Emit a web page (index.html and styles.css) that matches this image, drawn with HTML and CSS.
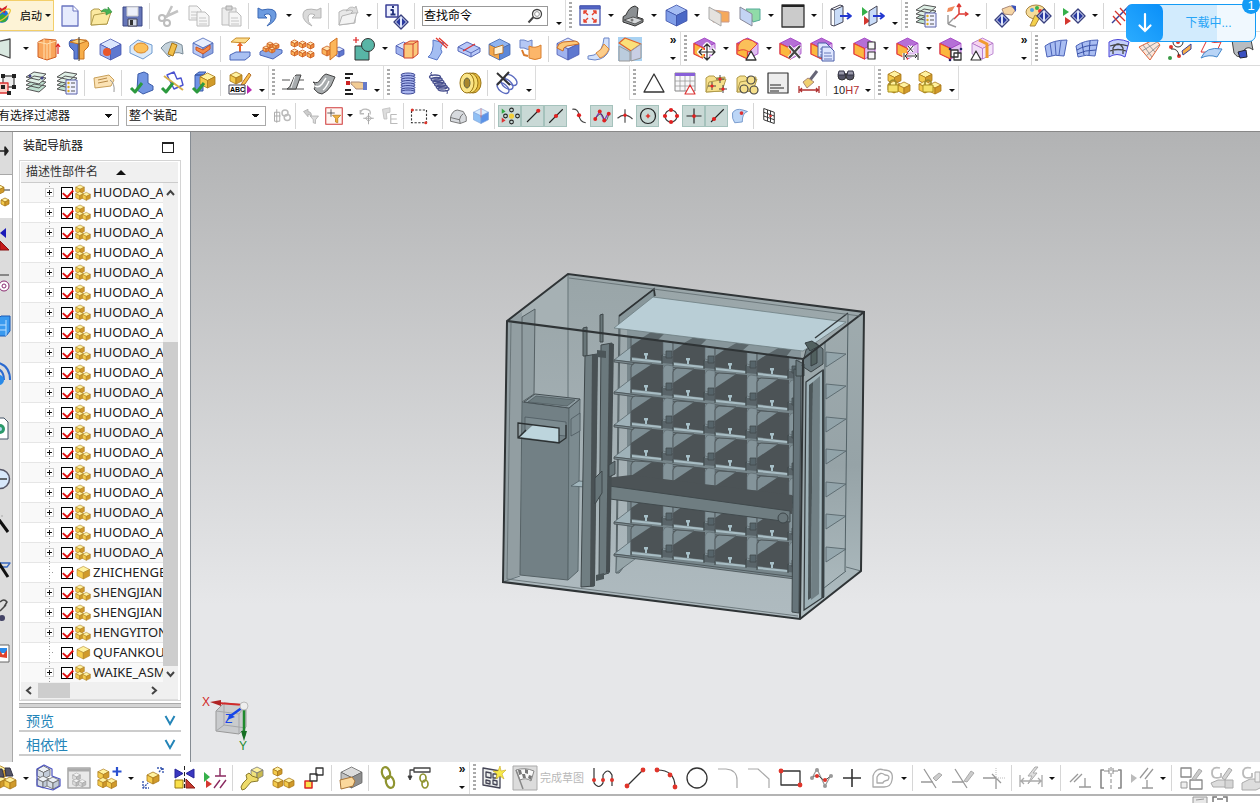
FILE: index.html
```html
<!DOCTYPE html>
<html lang="zh-CN">
<head>
<meta charset="utf-8">
<title>装配</title>
<link rel="stylesheet" href="styles.css">
</head>
<body>
<header class="ribbon">
  <div class="row row-edge">
    <div class="bar">
      <button class="start" type="button"><svg class="logo" viewBox="0 0 24 30"><circle cx="3" cy="18" r="10" fill="#1e73d8"/><path d="M-5 22q6 8 14 4l3-7-9-4z" fill="#35a93a"/><path d="M-2 4l5 3 8-5-4 12-6-4z" fill="#d3202a"/><ellipse cx="4" cy="17" rx="14" ry="5" transform="rotate(-38 4 17)" fill="none" stroke="#e9c63b" stroke-width="2"/></svg>启动<i class="tri"></i></button>
      <div class="items" data-items="new open save | cut copy paste | undo v redo | recent v | info |"></div>
      <label class="search"><input type="text" value="查找命令" aria-label="查找命令"><svg viewBox="0 0 16 16"><circle cx="10" cy="6" r="4.5" fill="#fff" stroke="#444" stroke-width="1.3"/><circle cx="10" cy="6" r="2.4" fill="none" stroke="#999"/><path d="M6.500 9l-5 5.500" stroke="#444" stroke-width="2"/></svg></label>
      <div class="items" data-items="w"></div>
    </div>
    <div class="bar grip" data-items="fit v view v shaded v section clip v backdrop v | edge edgeflip w"></div>
    <div class="bar grip last" data-items="layerset csys v | picksel palette | flip v | fishbone"></div>
  </div>
  <div class="row row-edge">
    <div class="bar cut" data-items="plane v extrude revolve hole boss emboss pocket | raise dots pattern mirror unite v split trim sheet cutbody wrap | blend fillet chamfer . »"></div>
    <div class="bar grip" data-items="fmove v freplace v fdelete fcopy v fpattern v fdim v fgroup foffset .. »"></div>
    <div class="bar grip last" data-items="surf1 surf2 surf3 surf4 sketchcv surf5 surf6"></div>
  </div>
  <div class="row">
    <div class="bar cut" data-items="nodes layers layerset | tag | chk1 chk2 chk3 | abc w"></div>
    <div class="bar grip" data-items="clamp clamp2 hand w"></div>
    <div class="bar grip" data-items="spring1 spring2 washer | nospring w"></div>
    <div class="bar grip apart" data-items="triangle table folderx folderg textbox brush | fit10 w"></div>
    <div class="bar grip" data-items="lock1 lock2 w"></div>
  </div>
  <div class="row filters">
    <select class="f-type" aria-label="选择过滤器"><option>没有选择过滤器</option></select>
    <select class="f-scope" aria-label="选择范围"><option>整个装配</option></select>
    <div class="items small" data-items="linkf | filt1 filt2 v rot rot2 | marquee v | solid cubeb | snap! endpt! midpt! tang poly! cross circ! quad plus! online! face | grid"></div>
  </div>
</header>

<main class="work">
  <nav class="tabs" id="tabs" aria-label="资源条"></nav>
  <section class="panel">
    <div class="panel-title"><h1>装配导航器</h1><button type="button" class="max" aria-label="最大化"></button></div>
    <div class="tree-box">
      <div class="tree-head">描述性部件名<i class="up"></i></div>
      <div class="tree-body">
        <ul class="tree" id="tree"></ul>
        <div class="vscroll"><svg viewBox="0 0 15 20"><path d="M4 12l3.500-4 3.500 4" fill="none" stroke="#444" stroke-width="2"/></svg><span class="vthumb"></span><svg viewBox="0 0 15 16"><path d="M4 6l3.500 4 3.500-4" fill="none" stroke="#444" stroke-width="2"/></svg></div>
      </div>
      <div class="hscroll"><svg viewBox="0 0 17 17"><path d="M10 5L6 8.500 10 12" fill="none" stroke="#444" stroke-width="2"/></svg><span class="hthumb"></span><svg viewBox="0 0 17 17"><path d="M7 5l4 3.500L7 12" fill="none" stroke="#444" stroke-width="2"/></svg></div>
    </div>
    <div class="splitter"></div>
    <button type="button" class="fold">预览<svg viewBox="0 0 12 12"><path d="M1.500 1L6 9l4.500-8" fill="none" stroke="#2485b8" stroke-width="2"/></svg></button>
    <button type="button" class="fold">相依性<svg viewBox="0 0 12 12"><path d="M1.500 1L6 9l4.500-8" fill="none" stroke="#2485b8" stroke-width="2"/></svg></button>
  </section>
  <section class="viewport">
    <svg id="scene" viewBox="191 132 1069 630" preserveAspectRatio="xMidYMid meet" role="img" aria-label="装配模型">
      <defs>
        <linearGradient id="front" x1="0" y1="0" x2="0" y2="1"><stop offset="0" stop-color="#99a5a8"/><stop offset="1" stop-color="#afbbc0"/></linearGradient>
        <linearGradient id="side" x1="0" y1="0" x2="0" y2="1"><stop offset="0" stop-color="#9fabae"/><stop offset=".5" stop-color="#96a3a7"/><stop offset="1" stop-color="#b0bec2"/></linearGradient>
        <g id="bay">
          <path d="M0 6l4-4 38 4v27L0 28z" fill="#7e8e94"/>
          <path d="M0 17L21 3l11 1v28L0 28z" fill="#4c5356"/>
          <path d="M0 28V6q1-4 4-4l17 1" fill="none" stroke="#50595c"/>
          <path d="M32 25V8q1-4 4-4l6 1v20l-3 2z" fill="#84949a" stroke="#5b676b" stroke-width=".6"/>
          <path d="M31 27h11v8l-11-1z" fill="#596469"/>
          <path d="M35 22h6v7h-6z" fill="#56646a" stroke="#414a4d" stroke-width=".8"/>
          <path d="M1 29l29 3v2L1 31z" fill="#a9bec5"/>
          <path d="M13 24h4v2l-1 1v3h-2v-3l-1-1z" fill="#a7c0c8"/>
          <path d="M0 28v4M31 26v9" fill="none" stroke="#3f484b"/>
        </g>
        <g id="shelf">
          <path d="M614 34l17-13v15z" fill="#9fb2b9" stroke="#5d6b70" stroke-width=".8"/>
          <use href="#bay" x="631" y="3"/><use href="#bay" x="673" y="8"/><use href="#bay" x="715" y="13"/><use href="#bay" x="757" y="18"/>
          <path d="M614 34l181 23v2L614 36z" fill="#7d8c91" stroke="#454e52" stroke-width=".8"/>
        </g>
        <path id="rshelf" d="M826 0l20 2-20 13z" fill="#8fa2a9" fill-opacity=".7" stroke="#59686d" stroke-width=".9"/>
      </defs>

      <path d="M568 274L507 321 503 582 800 619 861 571 864 312z" fill="url(#front)"/>
      <path d="M568 274L507 321l62 8z" fill="#a6b1b4"/>
      <path d="M507 321l15-9-2 263-16 7z" fill="#929ea2"/>
      <path d="M864 312l-61 47-3 260 61-48z" fill="url(#side)"/>
      <path d="M568 274v124M520 576l-17 6M846 567l15 4" fill="none" stroke="#647277"/>

      <path d="M522 317l13-8-1 85-12 8z" fill="#909da1" stroke="#566165"/>
      <path d="M522 402l47 6-1 172-48-5z" fill="#728085" stroke="#566266"/>
      <path d="M569 408l11-9-2 172-10 9z" fill="#7c8b90" stroke="#5a686c"/>
      <path d="M524 402l11-8 45 5-11 9z" fill="#8c9ba0" stroke="#465054"/>
      <path d="M528 402l8-6 39 4-8 6z" fill="#6b7a7e" stroke="#4c585c" stroke-width=".7"/>
      <path d="M525 417l41 5v14l-41-4zM571 419l9-6v18l-9 5z" fill="#7c8b90" stroke="#47535a" stroke-width=".7"/>
      <path d="M533 425l26 3v14l-39-5z" fill="#bdd5dd"/>
      <path d="M518 423l41 5v15l-41-5zM518 438l8-8M559 443l7-5v-13" fill="none" stroke="#2b3032" stroke-width="1.300"/>
      <path d="M571 486l8-5 12 1-6 5z" fill="#a2b7be" stroke="#516066" stroke-width=".8"/>

      <path d="M619 316l35-27v9l-34 28-3 237 20-13-18 23-3 0z" fill="#88979b" stroke="#485357" stroke-width=".8"/>
      <path d="M619 316l35-27 1 7" fill="none" stroke="#2f3436" stroke-width="1.600"/>
      <path d="M616 573l27-20-12-6-14 4z" fill="#95a4a8" stroke="#5d6b70" stroke-width=".8"/>
      <path d="M627 328l168 22-2 228-166-22z" fill="#77868b"/>
      <use href="#shelf" y="326"/><use href="#shelf" y="358"/><use href="#shelf" y="391"/><use href="#shelf" y="423"/><use href="#shelf" y="456"/><use href="#shelf" y="488"/><use href="#shelf" y="520"/>
      <path d="M627 328l174 23v7l-174-22z" fill="#87969b"/>
      <path d="M642 338l12-8 12 2-8 8zM684 343l12-7 12 2-8 8zM726 349l12-7 12 2-8 7zM768 354l12-7 12 2-6 8z" fill="#5c676b"/>
      <path d="M653 297l193 25-43 29-189-23z" fill="#b9ced6" stroke="#6d7d82" stroke-width=".8"/>

      <path d="M606 478l25-3 161 20v19l-186-24z" fill="#4c5356"/>
      <path d="M602 485l188 26v11L602 498z" fill="#6f7d81" stroke="#414a4d"/>
      <circle cx="607" cy="492" r="4" fill="#333b3e"/><circle cx="607" cy="492" r="1.800" fill="#7d8a8e"/>
      <circle cx="783" cy="518" r="5" fill="#6a777b" stroke="#3d4649"/>

      <path d="M583 328l4-1v29h-4zM600 315l3-1v28h-3z" fill="#697679" stroke="#3e4649"/>
      <path d="M601 345l11-2-3 230-10 3z" fill="#6b797d" stroke="#3f484b"/><path d="M609 343l5 1-4 228-4 1z" fill="#454d50"/>
      <path d="M585 356l12-2-3 232-13 1z" fill="#707e82" stroke="#3f484b"/><path d="M592 354l6 1-3 231-5 1z" fill="#495154"/>
      <path d="M595 478l7-7v22l-7 11zM609 465l6-4v13l-6 3z" fill="#667478" stroke="#3e474a"/>
      <path d="M597 350l9 1v7l-9-1zM596 575l8-2v6l-8 2z" fill="#4b5558"/>

      <use href="#rshelf" y="352"/><use href="#rshelf" y="384"/><use href="#rshelf" y="417"/><use href="#rshelf" y="449"/><use href="#rshelf" y="482"/><use href="#rshelf" y="514"/><use href="#rshelf" y="547"/>
      <path d="M848 314l-3 257M825 342l-1 255M846 571l-22 17" fill="none" stroke="#536267"/>
      <path d="M794 369l7 1-2 243-7-1z" fill="#66747a" stroke="#3f484b"/>
      <path d="M806 382l17-12-1 228-18 12z" fill="#9fb2b8" stroke="#343b3e" stroke-width="1.200"/>
      <path d="M809 385l4-3-2 216-3 2z" fill="#4b5558"/><path d="M813 382l7-6-1 218-8 6z" fill="#718085"/>
      <path d="M823 370v228" stroke="#3a4245" stroke-width="2"/>
      <path d="M806 350l10-7 7 6v15l-12 8-9-6zM796 360l8 4v12h-8z" fill="#6b7a7f" stroke="#3b4447"/>
      <path d="M805 343l7-2 7 5-9 5zM811 352l6-3v14l-6 3z" fill="#51605f" stroke="#363f42"/>
      <path d="M815 338l33-25" stroke="#353c3f" stroke-width="1.500"/>
      <path d="M568 274L507 321 503 582 800 619 861 571 864 312zM507 321l296 38 61-47M803 359l-3 260" fill="none" stroke="#2f3436" stroke-width="2"/>
      <path d="M511 323l-4 256 291 37M569 278l291 38" fill="none" stroke="#5f6b6f" stroke-width=".8"/>

      <path d="M216 711l8-8 22 2v22l-7 7-23-3z" fill="#c9cbcd" stroke="#999"/><path d="M216 711l23 3v20M239 714l7-9M224 703v22l22 3M224 725l-8 6" fill="none" stroke="#a5a7a9"/>
      <path d="M244 705l-26-2" stroke="#d22b2b" stroke-width="2"/><path d="M210 702l11-2v6z" fill="#b02424"/>
      <path d="M244 706v30" stroke="#1d8a2d" stroke-width="2.500"/><path d="M241 731h6l-3 10z" fill="#176f24"/>
      <path d="M243 707l-14 10" stroke="#1646e8" stroke-width="2.500"/><path d="M227 720l3-6 5 3z" fill="#1646e8"/><circle cx="244" cy="706" r="4" fill="#eee" stroke="#bbb"/>
      <g class="axis"><text x="202" y="706" fill="#d22b2b">X</text><text x="239" y="750" fill="#1d8a2d">Y</text><text x="225" y="723" fill="#1646e8">Z</text></g>
    </svg>
  </section>
</main>

<footer>
  <div class="row sketchrow">
    <div class="bar cut" data-items="find v asm asmwin asmadd v asmmove mirrorasm constr | wrench cubes3 chain | stampcube | link linkpath ... »"></div>
    <div class="bar grip last" data-items="sketchnew finish finish-label prof line arc circle corner chamf rect spline cross2 offset v | trim1 trim2 trim3 | qdim v | perp sym autoc v | show lock3 lock4"></div>
  </div>
  <div class="status"><svg viewBox="0 0 40 7"><path d="M1 8V1h14v7" fill="#e8e8e8" stroke="#999"/><path d="M4 4l8-1" stroke="#999"/><path d="M21 6V1h4m6 0h4v5M25 3h6" fill="none" stroke="#777" stroke-width="1.500"/></svg></div>
</footer>

<aside class="download"><span class="dl-icon"><svg viewBox="0 0 24 24"><path d="M12 3v17M6.500 14.500L12 20l5.500-5.500" fill="none" stroke="#fff" stroke-width="2.200" stroke-linecap="round"/></svg></span><span class="dl-text">下载中...</span><span class="badge">1</span></aside>
<script src="script.js"></script>
</body>
</html>
```
FILE: styles.css
```css
* { box-sizing: border-box; }
body {
  margin: 0;
  height: 100vh;
  display: flex;
  flex-direction: column;
  overflow: hidden;
  position: relative;
  background: #fff;
  color: #111;
  font: 12px/16px "Liberation Sans", "Noto Sans CJK SC", sans-serif;
}
button { padding: 0; border: 0; background: none; font: inherit; color: inherit; }
svg { display: block; flex: none; overflow: visible; }

.row { display: flex; height: 34px; overflow: hidden; }
.row:first-child, .filters { height: 32px; }
.row-edge { border-bottom: 1px solid #dcdcdc; }
.bar { display: flex; align-items: center; flex: none; border-right: 1px solid #dcdcdc; border-bottom: 1px solid #dcdcdc; }
.row-edge .bar { border-bottom: 0; }
.bar.last { flex: 1 0 0; border-right: 0; }
.bar.cut { margin-left: -11px; }
.bar.apart { margin-left: 93px; border-left: 1px solid #dcdcdc; }
.grip::before { content: ""; width: 3px; height: 28px; margin: 0 2px 0 3px; background: repeating-linear-gradient(#aaa 0 2px, #fff 2px 4px); }
.items { display: flex; align-items: center; }
.tool { width: 31px; height: 30px; display: flex; align-items: center; justify-content: center; flex: none; }
.tool svg { width: 24px; height: 24px; }
.small .tool { width: 23px; height: 22px; }
.small .tool svg { width: 18px; height: 18px; }
.small .drop { width: 10px; }
.small .pressed { background: #c9d9d6; border: 1px solid #a5c2bc; }
.sep { width: 1px; height: 26px; margin: 0 3px 0 2px; background: #d6d6d6; flex: none; }
.drop { width: 12px; height: 30px; display: flex; align-items: center; justify-content: center; flex: none; }
.drop.low { align-items: flex-end; padding-bottom: 6px; width: 13px; }
.tri, .drop::after { content: ""; border: 3px solid transparent; border-top-color: #111; border-bottom: 0; }
.more { width: 14px; height: 30px; display: flex; flex-direction: column; align-items: center; justify-content: space-between; flex: none; font-weight: bold; line-height: 12px; }
.more::after { content: ""; border: 3px solid transparent; border-top-color: #111; border-bottom: 0; margin-bottom: 4px; }
.gap1 { width: 21px; flex: none; }
.gap2 { width: 20px; flex: none; }
.gap3 { width: 21px; flex: none; }
.start { width: 54px; height: 31px; display: flex; align-items: center; gap: 4px; background: #fdf3d6; border: 1px solid #f3cf6a; border-left: 0; color: #000; white-space: nowrap; font-size: 11px; }
.logo { width: 16px; height: 30px; margin-top: -4px; }
.start .tri { margin-left: -1px; }
.search { width: 126px; height: 20px; margin: 0 4px; display: flex; align-items: center; border: 1px solid #999; background: #fff; }
.search input { border: 0; padding: 0 0 0 1px; width: 104px; font: inherit; outline: 0; background: none; }
.search svg { width: 16px; height: 16px; }

.filters { align-items: center; border-bottom: 1px solid #888; }
select {
  height: 20px; border: 1px solid #aaa; border-radius: 0; padding: 0 2px; font: inherit; color: #111; appearance: none;
  background: linear-gradient(to bottom right, #111 50%, transparent 50%) no-repeat right 5px center / 4px 4px, linear-gradient(to bottom left, #111 50%, transparent 50%) no-repeat right 9px center / 4px 4px, #fff;
}
.f-type { width: 136px; margin-left: -17px; }
.f-scope { width: 140px; margin: 0 4px 0 7px; }

.work { flex: 1; min-height: 0; display: flex; }
.tabs { width: 13px; background: #dcdcdc; overflow: hidden; border-right: 1px solid #a8a8a8; flex: none; }
.tabs button { display: flex; align-items: center; width: 13px; height: 43px; }
.tabs .mid { height: 48px; }
.tabs .tall { height: 54px; }
.tabs svg { width: 12px; height: 24px; overflow: hidden; }
.tabs .active { background: #fff; }
.tabs button:first-child { border-bottom: 1px solid #a8a8a8; }
.panel { width: 178px; flex: none; padding: 0 9px 0 6px; border-right: 1px solid #858c93; background: #fff; display: flex; flex-direction: column; }
.panel-title { display: flex; align-items: center; justify-content: space-between; height: 28px; padding: 0 7px 0 4px; }
h1 { margin: 0; font-size: 12px; font-weight: normal; }
.max { width: 12px; height: 11px; border: 1px solid #222; border-top-width: 2px; margin-top: 3px; }
.tree-box { flex: 1; min-height: 0; border: 1px solid #d4d4d4; display: flex; flex-direction: column; padding: 1px 2px 0 1px; }
.tree-head { height: 21px; flex: none; display: flex; align-items: center; gap: 18px; padding-left: 5px; background: #f0f0f0; border-bottom: 1px solid #ccc; color: #333; }
.up { border: 5px solid transparent; border-top: 0; border-bottom-color: #111; }
.tree-body { flex: 1; min-height: 0; display: flex; }
.tree { list-style: none; margin: 0; padding: 0; flex: 1; min-width: 0; overflow: hidden; }
.tree li { display: flex; align-items: center; height: 20px; border-bottom: 1px solid #e6e6e6; padding-left: 24px; white-space: nowrap; font: 13px/17px "Noto Sans", "Noto Sans CJK SC", sans-serif; color: #222; background: repeating-linear-gradient(#999 0 1px, transparent 1px 3px) no-repeat 28px 0 / 1px 100%; }
.tree li:nth-child(odd) { background-color: #f9f9f9; }
.expand { width: 9px; height: 9px; flex: none; border: 1px solid #ccc; background: linear-gradient(#111, #111) no-repeat center / 5px 1px, linear-gradient(#111, #111) no-repeat center / 1px 5px, #fff; }
.leaf { width: 9px; height: 1px; flex: none; background: repeating-linear-gradient(90deg, #999 0 1px, transparent 1px 3px) no-repeat 4px 0; }
.tree input { appearance: none; flex: none; width: 12px; height: 12px; margin: 0 2px 0 7px; border: 1px solid #000; outline: 0; background: #fff; position: relative; }
.tree input:checked::after { content: ""; position: absolute; left: 1px; top: 1px; width: 8px; height: 5px; border: 2px solid #e01010; border-top: 0; border-right: 0; transform: rotate(-48deg); }
.tree label { display: flex; align-items: center; }
.tree svg { width: 16px; height: 16px; margin: 0 2px 0 0; }
.vscroll { width: 15px; flex: none; background: #f0f0f0; display: flex; flex-direction: column; }
.vscroll svg { width: 15px; height: 20px; }
.vscroll svg:last-child { height: 16px; }
.vthumb { margin-top: auto; height: 65%; background: #cdcdcd; }
.hscroll { height: 18px; flex: none; display: flex; align-items: center; background: #f0f0f0; border-bottom: 1px solid #ddd; }
.hscroll svg { width: 17px; height: 17px; }
.hscroll svg:last-child { margin: 0 16px 0 auto; }
.hthumb { width: 32px; height: 15px; background: #cdcdcd; }
.splitter { height: 5px; flex: none; background: #d4d4d4; border: 1px solid #aaa; border-width: 1px 0; margin-top: 2px; }
.fold { flex: none; display: flex; align-items: center; justify-content: space-between; height: 24px; padding: 3px 5px 0 7px; border-bottom: 2px solid #ccc; font-size: 14px; color: #2485b8; }
.fold:last-child { margin-bottom: 6px; }
.fold svg { width: 12px; height: 12px; }
.viewport { flex: 1; min-width: 0; overflow: hidden; background: linear-gradient(#b2b3b4, #e6e7e9 75%, #e6e7e9); }
.viewport svg { width: 100%; height: 100%; }
.axis { font: 12px "Liberation Sans", sans-serif; }

.sketchrow.row { height: 34px; border-bottom: 2px solid #b4b4b4; background: #fff; }
.sketchrow .bar { border-bottom: 0; }
.finish-label { width: 48px; flex: none; font-size: 11px; color: #b8b8b8; white-space: nowrap; }
.status { height: 7px; padding-left: 1192px; overflow: hidden; }
.status svg { width: 40px; height: 7px; }

.download { position: absolute; right: 4px; top: 4px; width: 130px; height: 38px; display: flex; border: 1px solid #149bf5; border-radius: 7px; background: linear-gradient(90deg, #d2ebfd 70%, #f0f8fe 70%); }
.dl-icon { width: 37px; margin: -1px; border-radius: 7px; background: linear-gradient(45deg, #2bacff, #0a8ff8); display: flex; align-items: center; justify-content: center; }
.dl-icon svg { width: 24px; height: 24px; }
.dl-text { flex: 1; display: flex; align-items: center; justify-content: center; color: #27a5f7; }
.badge { position: absolute; right: -5px; top: -9px; width: 18px; height: 18px; border-radius: 9px; background: #149bf5; color: #fff; text-align: center; font-size: 13px; line-height: 20px; }
```
FILE: script.js
```javascript
const p = (d, fill = 'none', stroke = '#444', w = 1) => `<path d="${d}" fill="${fill}" stroke="${stroke}" stroke-width="${w}" stroke-linejoin="round"/>`;
const dot = (x, y, c = '#e0352b', r = 2) => `<circle cx="${x}" cy="${y}" r="${r}" fill="${c}"/>`;

// palettes: top, left, right, outline
const BLUE = ['#dbe6fd', '#9fb2ee', '#5f78cf', '#4a58b0'];
const GOLD = ['#fff2a0', '#f4cb4c', '#d09a2a', '#a9781a'];
const ORANGE = ['#ffe2ae', '#fbb45c', '#ef8a3c', '#cc5f22'];
const GRAY = ['#f4f4f4', '#dcdcdc', '#bdbdbd', '#9a9a9a'];
const WIRE = ['#eef2f6', '#d6dde6', '#c2cbd8', '#666'];
const FACE = ['#b56fd6', '#fbb63c', '#dfbdf0', '#a03cc0'];

function cube(x, y, s, c = BLUE) {
  const h = s / 2, q = s / 4;
  return p(`M${x} ${y + q}l${h} ${-q} ${h} ${q} ${-h} ${q}z`, c[0], c[3], .8) +
    p(`M${x} ${y + q}l${h} ${q}v${h}l${-h} ${-q}z`, c[1], c[3], .8) +
    p(`M${x + s} ${y + q}l${-h} ${q}v${h}l${h} ${-q}z`, c[2], c[3], .8);
}
const stack = (c, x = 0, y = 0, s = 1) => `<g transform="translate(${x} ${y}) scale(${s})">${cube(1, 0, 13, c)}${cube(1, 10, 12, c)}${cube(11, 11, 12, c)}</g>`;
const face = extra => cube(1, 1, 21, FACE) + p('M1 6.500v10.500l10.500 5V11.500z', '#fbb83f', '#e8423a', 1.300) + extra;
const folder = c => p('M2 7l3-2h5l2 2 9-1-3 14-16 1z', c, '#b09a4a') + p('M5 11l17-3-4 12-16 1z', c, '#b09a4a');
const grayFolder = p('M3 8l4-2h5l8-2-1 15-16 2z', '#e8e8e8', '#b5b5b5') + p('M6 12l15-4-3 11-15 2z', '#f3f3f3', '#b5b5b5');
const page = (x, y, c = '#f2f2f2', s = '#999') => p(`M${x} ${y}h8l4 4v10h-12z`, c, s) + p(`M${x + 2} ${y + 6}h7m-7 3h8m-8 3h8`, 'none', s, .8);
const sheets = p('M2 18l8-5 12 2-7 6zM2 14l8-5 12 2-7 6z', '#bfe0d0', '#555') + p('M2 10l8-5 12 2-7 6zM2 6l8-5 12 2-7 6z', '#dff0e6', '#555');
const tick = p('M2 17l4 4 7-9', 'none', '#2c9a3e', 3);
const pad = (x, y) => p(`M${x + 2} ${y + 4}v-3q3-4 6 0v3`, 'none', '#9c8a2c', 1.600) + p(`M${x} ${y + 4}h10v7h-10z`, '#f5e26a', '#a98f1e');
const diamond = (x, y) => p(`M${x} ${y + 7}l7-7 7 7-7 7z`, '#dfe6fb', '#39407e', 1.400) + p(`M${x + 6} ${y + 3}v8l-4-4zM${x + 8} ${y + 3}v8l4-4z`, '#2a3aa0', 'none');
const scissors = p('M15 2L9 14M21 7L8 13', 'none', '#c3c3c3', 2.500) + '<g fill="none" stroke="#bdbdbd" stroke-width="2"><circle cx="5" cy="14" r="3"/><circle cx="10" cy="19" r="3"/></g>';
const flagPair = p('M1 3v9l6-4z', '#36b04a', 'none') + p('M3 12v9l6-4z', '#d4372f', 'none');

const ICONS = {
  new: p('M4 2h11l5 5v15H4z', '#e6ebfd', '#6a74c0', 1.300) + p('M15 2v5h5', '#fff', '#6a74c0'),
  open: folder('#fbe9a0') + p('M12 8q3-5 7-2V3l4 5-6 3V8q-2-1-5 0z', '#47b254', '#2f8f3c', .6),
  save: p('M3 3h19v19H3z', '#6676b8', '#3b4684') + p('M7 3h11v9H7z', '#edf0fa', '#ccc') + p('M8 15h9v7H8z', '#d5dbe8', '#445') + p('M10 16h3v5h-3z', '#333', 'none'),
  cut: scissors, copy: page(1, 2, '#f6f6f6', '#bbb') + page(9, 8, '#f6f6f6', '#bbb'), paste: p('M3 4h14v17H3z', '#ececec', '#bbb') + p('M7 2h6v4H7z', '#d5d5d5', '#aaa') + page(10, 8, '#f6f6f6', '#bbb'),
  undo: p('M2 4v10h9L8 11q6-3 7 2t-4 9q10-5 9-12T6 6z', '#6c9be0', '#3b68b5'),
  redo: p('M22 4v10h-9l3-3q-6-3-7 2t4 9Q3 17 4 10t14-4z', '#dadada', '#b5b5b5'),
  recent: grayFolder + p('M10 7q4-6 9-3l1-2 2 7-7 0 2-2q-3-2-7 0z', '#ddd', '#aaa', .7),
  info: p('M1 1h12v12H1z', '#edf0ff', '#3a3f96', 1.500) + p('M5.500 6H8v4M5.500 10.500h5M7 3h2', 'none', '#22307a', 1.800) + diamond(9, 11),
  fit: p('M2 2h20v19H2z', '#f2f4fb', '#4b5ab0', 1.300) + p('M2 2h20v3H2z', '#5365c8', '#4b5ab0') + p('M10 11L6 7m0 3V7h3M14 11l4-4m-3 0h3v3M10 14l-4 4m0-3v3h3M14 14l4 4m0-3v3h-3', 'none', '#e5432f', 1.400),
  view: p('M2 15q-1-3 3-4Q8 3 14 2l3 2-1 9 6 2v3l-8 4-12-4z', '#8b8f92', '#333') + p('M3 16l9-3 10 3-8 4z', '#d5d8da', '#555') + dot(11, 16, '#777', 1.500),
  shaded: cube(2, 1, 21, ['#a4bcf3', '#809ee8', '#4a68c6', '#3c52a8']),
  section: p('M6 6l16 2v10H6z', '#f5a95c', '#c98') + p('M2 3l12 7v12L2 15z', '#e5e2de', '#aaa'), clip: p('M8 5h14v11l-7 2z', '#90dba8', '#5a9') + p('M2 3l12 7v12L2 15z', '#c3d4f4', '#889'),
  backdrop: p('M1 1h22v22H1z', '#cbcbcb', '#333', 1.300) + p('M1 2h22', 'none', '#222', 2),
  edge: p('M4 6l9-4v16l-9 4z', '#c9dcf8', '#445') + p('M4 6l-3-1V21l3 1', '#fff', '#445') + p('M1 5l9-4 3 1', 'none', '#445') + p('M10 12h11m-4-3l4 3-4 3', 'none', '#2338d0', 1.800),
  edgeflip: flagPair + p('M8 7l8-5v16l-8 4z', '#c9dcf8', '#445') + p('M12 12h11m-4-3l4 3-4 3', 'none', '#2338d0', 1.800),
  layerset: sheets + p('M11 9h11v14H11z', '#eef0ff', '#5a62a8') + p('M16 12h4m-4 4h4m-4 4h4', 'none', '#555') + dot(13.500, 12, '#e0b020', 1.200) + dot(13.500, 16, '#e0b020', 1.200) + dot(13.500, 20, '#e0b020', 1.200),
  csys: p('M14 0v10h9m-3-2l3 2-3 2M14 10l-5 5M12 3l2-3 2 3', 'none', '#dd3b35', 1.500) + p('M3 11v9M3 20l8 3M3 20l6-6', 'none', '#999', 1.400) + p('M2 8l1-4 7-2-3 5z', '#f08a5a', 'none'),
  picksel: p('M8 5l8-3 6 3-4 6-8-1z', '#f6d5a4', '#a87') + p('M17 1l5 1v6z', '#3a52b8', 'none') + diamond(1, 9), palette: '<ellipse cx="11" cy="8" rx="10" ry="7" fill="#f6dc9a" stroke="#a98540"/>' + dot(7, 6, '#4aa3e8') + dot(12, 4, '#3bb34a') + dot(15, 7, '#e33') + p('M10 11l-5 11h5l5-9z', '#f4d04a', '#a98540') + diamond(12, 5),
  flip: p('M1 4v8l6-4z', '#36b04a', 'none') + p('M3 13v8l6-4z', '#d4372f', 'none') + diamond(9, 5),
  fishbone: p('M1 19L19 1', 'none', '#3a3f96', 1.500) + p('M4 7l10 10M9 4l9 10M2 12l8 9', 'none', '#d4372f', 1.300),
  plane: p('M3 5l14-3v19L3 16z', '#d9e8e0', '#444', 1.300),
  extrude: p('M2 5l6-3 12 1v17l-9 3-9-3z', '#f9a65c', '#cf5f25') + p('M8 2v20M14 3v18M2 5l9 2 9-3M11 7v15', 'none', '#ffe0b0') + p('M22 17V8m-2 2l2-3 2 3', 'none', '#d22', 1.200),
  revolve: p('M11 3H4Q1 5 3 10l4 4v8h4z', '#5e7ed4', '#3b55a8') + p('M12 3h7q4 2 2 7l-4 4v8h-5z', '#f7ae4a', '#c87420') + p('M3 5l8-3 9 2-8 3z', '#fbd27a', '#c87420') + p('M12 0v24', 'none', '#333'),
  hole: cube(2, 2, 21, BLUE) + dot(9, 15, '#e8572c', 4), boss: p('M1 9l8-6 14 5v8l-9 6L1 16z', '#dceaf8', '#6f9bd0') + '<ellipse cx="12" cy="11" rx="7" ry="5" fill="#fcc05a" stroke="#d98524"/>',
  emboss: p('M1 11Q9 0 22 8l1 9q-8-4-14 3z', '#c5d3dc', '#7b8c98') + p('M12 6l5 2-4 11-5-2z', '#f2c04a', '#a87414'),
  pocket: cube(2, 1, 20, ['#e8eefc', '#b9c9f4', '#90a6e0', '#4a66b8']) + p('M5 10l7 3 7-5v4l-7 5-7-4z', '#f58a45', '#cc5522'),
  raise: p('M3 5l5-4h14l-5 5z', '#fcdc8a', '#c98e2c') + p('M11 15V9H9l3-4 3 4h-2v6z', '#e8652c', 'none') + p('M2 18l6-3h14v4l-5 4H2z', '#a9c0f2', '#4a66b8'),
  dots: p('M1 15l8-5 14 3v3l-9 6L1 18z', '#8eaae8', '#4a66b8') + cube(4, 9, 6, ORANGE) + cube(10, 10, 6, ORANGE) + cube(8, 5, 6, ORANGE) + cube(14, 6, 6, ORANGE),
  pattern: [1, 9, 17].map((x, i) => cube(x, 3 + i, 7, ORANGE) + cube(x, 12 + i, 7, ORANGE)).join(''),
  mirror: cube(1, 9, 10, ORANGE) + cube(13, 10, 10, BLUE) + p('M9 6l7-5v16l-7 6z', '#fcb65a', '#d07020'),
  unite: p('M3 9h14v14H3z', '#58b5a6', '#333') + '<circle cx="16" cy="8" r="6.500" fill="#58b5a6" stroke="#333"/>' + p('M4 0v6M1 3h6', 'none', '#d22', 1.200),
  split: cube(1, 5, 15, BLUE) + p('M9 7l6-3h8v13l-5 4H9z', '#fbc97c', '#d2402c') + p('M9 7h9l5-3M18 7v14', 'none', '#d2402c'), trim: p('M7 3l11 3q-5 4-2 9l-5 8-9-3q6-4 5-17z', '#a4bef2', '#5a78c8') + p('M10 1l11 10M13 1l9 8', 'none', '#e23a30', 1.300),
  sheet: p('M1 10l9-5 13 6v4l-9 5-13-6z', '#b9c9f8', '#5668b8') + p('M1 10l13 6v4M14 16l9-5', 'none', '#5668b8') + p('M6 14l12-7', 'none', '#d33', 1.300), cutbody: cube(1, 2, 21, ['#8fb4f0', '#f3a84c', '#5c88d8', '#4468b0']) + p('M6 11l9-3v8l-9 2z', '#fff3d8', '#b8752c'),
  wrap: p('M1 3h4q4 3 8 0v8q-4 3-8 0H1z', '#b5c8f5', '#6a83c8') + p('M10 9q6 3 12-1v13q-6 3-12 0z', '#fcb66a', '#d98030') + p('M3 13l2 5 4 1', 'none', '#d97a2a', 2),
  blend: cube(1, 1, 22, BLUE) + p('M1 11q1-5 6-6l12-1q3 0 4 3l-12 2q-4 1-4 5z', '#fcc878', '#cc6a24'), fillet: p('M17 1h5v12q-3 9-14 10l-7-1v-3l6-1Q16 14 17 1z', '#d3e1fb', '#6c86c8') + p('M9 16q6-3 8-9l5 5q-3 7-9 9z', '#fccd8a', '#d98a40'),
  chamfer: p('M0 0h24v24H0z', '#a9d2f2', 'none') + p('M1 9l11 6v9H1z', '#bcd', '#999') + p('M1 6l6-5 16 6-10 7z', '#fbe07a', '#e0622c', 1.200) + p('M13 14l10-7v14l-10 3z', '#c9cfe4', '#999'),
  fmove: face(p('M14 7v16M6 15h16M11 10l3-3 3 3M11 20l3 3 3-3M9 12l-3 3 3 3M19 12l3 3-3 3', 'none', '#fff', 4) + p('M14 7v16M6 15h16M11 10l3-3 3 3M11 20l3 3 3-3M9 12l-3 3 3 3M19 12l3 3-3 3', 'none', '#333', 1.200)),
  freplace: face(p('M2 9q3-7 9-7 6 1 10 5l-8 8Q8 11 2 14z', '#fbc05a', '#e8423a') + p('M15 14l5 9H10z', '#fff', '#333', 1.300)),
  fdelete: face(p('M10 9l11 12M21 9L10 21', 'none', '#fff', 4) + p('M10 9l11 12M21 9L10 21', 'none', '#444', 2.200)),
  fcopy: face(page(8, 6, '#dfe7ff', '#4a5fa8') + page(12, 10, '#dfe7ff', '#4a5fa8')), fpattern: face(p('M15 5h7v7h-7zM15 15h7v7h-7z', '#f7f7f7', '#333', 1.200)),
  fdim: face(p('M8 16v7m14-7v7M9 19h12m-10-2l-2 2 2 2m8-4l2 2-2 2M12 9l5 6m0-6l-5 6', 'none', '#fff', 3) + p('M8 16v7m14-7v7M9 19h12m-10-2l-2 2 2 2m8-4l2 2-2 2M12 9l5 6m0-6l-5 6', 'none', '#333')),
  fgroup: face(p('M12 13h7v7h-7zM15 16h7v7h-7z', '#fff', '#333', 1.300) + dot(11, 12, '#226', 1.300) + dot(22, 12, '#226', 1.300) + dot(11, 23, '#226', 1.300)),
  foffset: cube(2, 1, 21, ['#f6d2ee', '#f0dcf8', '#f4e4fa', '#b070c8']) + p('M9 3l8 4v14', 'none', '#f09a30', 3) + p('M6 14l5 9H1z', '#fff', '#333', 1.200),
  surf1: p('M1 9Q9 3 23 3l-3 16Q11 17 3 20z', '#a9bdf2', '#4a62b8') + p('M6 6l2 13M11 4.500l1 13.500M17 3.500l-2 14.500', 'none', '#4a62b8'), surf2: p('M1 9Q9 3 23 3l-3 16Q11 17 3 20z', '#a9bdf2', '#4a62b8') + p('M7 6l2 12M15 4l-1 14M2 13q8-5 20-5M2 17q8-4 19-4', 'none', '#3a52a8'),
  surf3: p('M3 5q8-5 20 0l-4 15q-8-5-16 0z', '#c3cefa', '#4a45d8') + p('M7 17v-6q5-8 10 0v6M4 9q9-3 18 0M4 14q8-3 16 0', 'none', '#444', 1.300), surf4: p('M2 10l16-8 5 6-10 15z', '#fbe6da', '#e0643a') + p('M6 8l9 12M10 6l8 9M5 14L20 5M9 19L22 8', 'none', '#999'),
  surf5: p('M2 15L8 3q6 4 14 2l-4 9q-8 2-16 1z', '#fff', '#d33') + p('M2 21q5-12 21-9l-5 8q-8-3-16 1z', '#b8d4f6', '#48c'), surf6: p('M2 3h19l2 10q-4-4-8-1l-4 6q-3 4-7-2z', '#b8bcc0', '#444') + p('M8 15l8-2 1 7-7 1z', '#3a50c0', '#223'),
  sketchcv: '<circle cx="10" cy="5" r="5" fill="#fff" stroke="#333"/>' + dot(10, 5) + dot(3, 10) + dot(11, 19) + dot(2, 21, '#3a9a45') + p('M3 12q7-1 8 7', 'none', '#333') + p('M14 14l9-7v5l-8 6z', '#f9b04a', '#3a3f96'),
  nodes: p('M10 5h11v11H10z', '#eee', '#555', 1.300) + p('M4 12h11v10H4z', '#fbd2c8', '#d33', 1.300) + [[10, 5], [21, 5], [21, 16], [10, 16], [16, 22], [4, 12]].map(a => p(`M${a[0] - 2} ${a[1] - 2}h4v4h-4z`, '#222', 'none')).join(''),
  layers: sheets + dot(6, 5, '#448', 1.500) + dot(18, 7, '#448', 1.500), tag: p('M2 7l15-3 5 5-3 6-16 2z', '#fbe2b4', '#c9a05a') + p('M6 9l9-2m-9 5l10-2', 'none', '#b88a48') + p('M18 9q5 3 4 12', 'none', '#999'),
  chk1: p('M9 3l6-2 4 2v9l5 3v4l-10 4-6-4z', '#7295e2', '#3b5ba8') + tick, chk2: p('M7 4l7-3 3 7 4-1 2 7-9 4z', '#fff', '#4a52d0', 1.400) + p('M4 5l19 14', 'none', '#d9b04a', 2) + tick, chk3: p('M4 4l4-3h7l-3 3zM4 4h8v16H4z', '#6f93e6', '#3b5ba8') + cube(9, 2, 15, GOLD) + tick,
  abc: cube(2, 1, 12, GOLD) + p('M14 12l7-10 2 2-6 9-4 2z', '#f9c04a', '#b5702a') + p('M1 14h16v9H1z', '#fff', '#445') + '<text x="2" y="21" font-size="7" font-weight="bold" font-family="Liberation Sans">ABC</text>' + p('M19 14v9l5-4z', '#b82ab0', 'none'),
  clamp: p('M1 9h8M16 9h7M1 18h22', 'none', '#555') + p('M6 18q3-1 5-7 2-6 4-7h5l-5 14z', '#a8acae', '#444') + p('M14 5l-4 12', 'none', '#eee'), clamp2: p('M1 11q5 2 7-2 4-6 6-6l9 3-4 9q-4 6-9 8-4 0-8-5 3-4-1-7z', '#a8acae', '#444') + p('M3 15q4 2 7-2l4-6m-3 12q3-2 6-9', 'none', '#fff', 1.400),
  hand: p('M2 3h8M2 7h5M2 19h6M2 23h8', 'none', '#222', 1.800) + p('M3 10h4v4H3z', '#c22', 'none') + p('M8 11h8l6 1v6h-9q-3-4-5-5z', '#f2cc94', '#a87') + p('M20 11h4v8h-4z', '#667ac8', 'none'),
  spring1: [4, 6.500, 9, 11.500, 14, 16.500, 19, 21].map(y => `<ellipse cx="12" cy="${y}" rx="7" ry="2" fill="#a9b5ee" stroke="#3c4794"/>`).join(''), spring2: [6, 8.500, 11, 13.500, 16, 18].map((y, i) => `<ellipse cx="${8 + i * 1.700}" cy="${y}" rx="5.500" ry="2" fill="none" stroke="#474f8e" stroke-width="1.300"/>`).join('') + p('M6 5Q2 3 5 1m13 18q4 1 2 4', 'none', '#474f8e'),
  washer: '<ellipse cx="15" cy="12" rx="8" ry="10" fill="#e4b83c" stroke="#997414"/><ellipse cx="12" cy="12" rx="8" ry="10" fill="#f8df70" stroke="#997414"/><ellipse cx="9" cy="12" rx="7" ry="10" fill="#fbe588" stroke="#997414"/><ellipse cx="9" cy="12" rx="3" ry="5" fill="#a9862c" stroke="#664"/>',
  nospring: [0, 4, 8].map(i => `<ellipse cx="${8 + i}" cy="${17 - i}" rx="4" ry="7" transform="rotate(-50 ${8 + i} ${17 - i})" fill="none" stroke="#5b6bc0" stroke-width="1.400"/>`).join('') + p('M2 2l13 12M14 1L2 14', 'none', '#333', 2),
  triangle: p('M12 3l10 18H2z', 'none', '#333', 1.300), table: p('M2 2h20v18H2z', '#f8f8fa', '#888') + p('M2 2h20v3H2z', '#8860d8', 'none') + p('M2 10h20M2 15h20M7 5v15M12 5v15M17 5v15', 'none', '#999', .8) + p('M17 14l5 9H12z', '#fff', '#d33', 1.200),
  folderx: folder('#f6e08c') + p('M16 4v8M12 8h8M8 11v8M4 15h8M19 14v8M15 18h8', 'none', '#444') + dot(16, 8, '#e22', 1.600) + dot(8, 15, '#e22', 1.600) + dot(19, 18, '#e22', 1.600), folderg: folder('#f6e08c') + '<g fill="#f6e08c" stroke="#444" stroke-width="1.200"><circle cx="16" cy="9" r="4"/><circle cx="9" cy="18" r="4"/><circle cx="19" cy="19" r="4"/></g>',
  textbox: p('M2 2h20v20H2z', '#ededed', '#333', 1.200) + p('M4 14h11M4 17h14M4 20h9', 'none', '#222'), brush: p('M20 0l-7 9', 'none', '#667', 3) + p('M11 7l6 4-7 6-4-6z', '#f0d070', '#a87') + p('M2 15v7m20-7v7M3 19h18m-16-2l-2 2 2 2m14-4l2 2-2 2', 'none', '#b03030', 1.300),
  fit10: '<g fill="#556" stroke="#333"><circle cx="8" cy="5" r="4"/><circle cx="16" cy="5" r="4"/></g>' + p('M5 0h5l1 4H4zM14 0h5l1 4h-7z', '#99a', '#334') + '<text x="-1" y="23" font-size="11" font-family="Liberation Sans" fill="#222">10<tspan fill="#b03030">H7</tspan></text>',
  lock1: stack(GOLD) + pad(1, 10), lock2: stack(GOLD) + pad(5, 10),
  linkf: p('M2 7h7v12H2zM5 3v18M2 12h8', 'none', '#aaa', 1.300) + '<g fill="none" stroke="#bbb" stroke-width="2"><circle cx="16" cy="8" r="4"/><circle cx="19" cy="14" r="4"/></g>',
  filt1: p('M2 6l6-3v3q6 1 4 7-1-4-4-3v3z', '#ccc', '#aaa') + p('M11 12h11l-4 5v5l-3-1v-4z', '#ddd', '#aaa'), filt2: p('M1 1h22v22H1z', '#fff6f2', '#d03a3a', 1.400) + p('M8 3v10M3 8h10', 'none', '#333') + p('M10 11h11l-4 4v6l-3-1v-5z', '#f0b03c', '#b77a1a'),
  rot: p('M3 9q1-7 8-6t5 7M3 4v5h5', 'none', '#bbb', 1.800) + p('M14 8v15M7 15h14M14 11l4 4-4 4-4-4z', 'none', '#aaa', 1.300), rot2: p('M2 3l10-2v6l-5 1 1 8H4z', '#ddd', '#bbb') + p('M13 10v12h9M13 10h8M13 16h8', 'none', '#bbb', 1.600),
  marquee: '<path d="M2 4h20v17H2z" fill="none" stroke="#333" stroke-width="1.500" stroke-dasharray="3 2"/>' + dot(3, 4) + dot(21, 21),
  solid: p('M2 14q2-9 9-10l8 2 4 7v6l-8 3-13-3z', '#d7dade', '#555') + p('M2 14l12 3 1 5M14 17q1-6 5-8', 'none', '#555'), cubeb: cube(2, 2, 20, ['#d8ecff', '#8fc0f5', '#5a92e8', '#7aa0d8']) + p('M12 2v12', 'none', '#d66'),
  snap: p('M1 2v7l5-3z', '#3a4', 'none') + p('M1 14v7l5-3z', '#d33', 'none') + dot(14, 12, '#f2cf3a', 3.500) + [[14, 4], [14, 20], [6, 12], [22, 12]].map(a => `<circle cx="${a[0]}" cy="${a[1]}" r="2.500" fill="none" stroke="#222" stroke-width="1.400"/>`).join(''),
  endpt: p('M4 20L19 5', 'none', '#222', 1.500) + dot(19, 5, '#e02020', 2.800), midpt: p('M3 21L21 3', 'none', '#222', 1.500) + dot(12, 12, '#e02020', 2.800), tang: p('M3 3q8-1 9 8t9 10', 'none', '#444', 1.600) + dot(12, 11, '#e02020', 2.800),
  poly: p('M2 17L9 6l6 12 6-11', 'none', '#8a3ac0', 1.800) + p('M2 17q9-14 12-3t7-4', 'none', '#333') + dot(3, 16, '#e02020', 2.600) + dot(9, 6, '#e02020', 2.600) + dot(15, 18, '#e02020', 2.600) + dot(21, 9, '#e02020', 2.600), cross: p('M12 3v18M2 15q10-9 20 1', 'none', '#444', 1.500) + dot(12, 11, '#e02020', 2.200),
  circ: '<circle cx="12" cy="12" r="10" fill="none" stroke="#222" stroke-width="1.600"/>' + p('M12 9v6M9 12h6', 'none', '#d22', 1.400) + dot(12, 12), quad: '<circle cx="12" cy="12" r="8" fill="none" stroke="#444" stroke-width="1.500"/>' + dot(12, 4, '#e02020', 2.800) + dot(12, 20, '#e02020', 2.800) + dot(4, 12, '#e02020', 2.800) + dot(20, 12, '#e02020', 2.800),
  plus: p('M12 2v20M2 12h20', 'none', '#222', 1.500) + dot(12, 12, '#e02020', 2.500), online: p('M4 20L21 3', 'none', '#222', 1.500) + dot(8, 16, '#e02020', 2.800), face: p('M2 8q4-7 14-4l6 2q-7 2-7 14l-10 1q-4-5-3-13z', '#bcd6f6', '#5c86c0') + dot(14, 8, '#d33', 2.500), grid: p('M5 2l14 5v15L5 17zM10 4v15M14 5v15M5 7l14 5M5 12l14 5', 'none', '#333', 1.300) + dot(14, 12, '#d33', 1.800),
  find: stack(GOLD) + p('M3 3h6l2 8H3zM12 2h5l3 8h-7z', '#556', '#334'), asm: stack(WIRE) + p('M1 3l7-4 8 4v7l8 3v7l-7 4-16-4z', 'none', '#4a52c0', 1.200), asmwin: p('M1 2h22v20H1z', '#e9e9e9', '#aaa', 1.600) + p('M1 4h22', 'none', '#aaa', 3) + stack(GRAY, 5, 7, .6), asmadd: stack(GOLD, -1, 3, .85) + p('M19 1v9M14.500 5.500h9', 'none', '#2a50d0', 2.200),
  asmmove: cube(6, 6, 12, GOLD) + '<g stroke-dasharray="2 1">' + p('M16 2h6v6M2 15v7h6M18 6l4-4M2 22l5-5', 'none', '#3a58b0', 1.400) + '</g>', mirrorasm: p('M3 3v9l8-4.500zM22 3v9l-8-4.500z', '#3a38c0', '#26249a') + p('M3 14h8v8H3z', '#f9e04a', '#997a10') + p('M14 13l9 9h-9z', '#c83a30', '#8a2018') + '<path d="M12.500 0v24" stroke="#222" stroke-dasharray="4 2"/>',
  constr: p('M1 6v10l6-5z', '#36b04a', 'none') + p('M3 14v8l6-4z', '#d4372f', 'none') + p('M17 2v8M12 10h11M11 22l6-8m0 8l6-8', 'none', '#8a2a60', 1.400), wrench: cube(11, 1, 12, ['#fff3a0', '#efe27c', '#c9ba50', '#777']) + p('M1 21q1-4 6-8l-1-4 3-2 3 3 6 2v3l-7 1-6 7-3 1z', '#eedb6a', '#8a7a2a'), cubes3: cube(2, 1, 9, GOLD) + cube(2, 12, 10, GOLD) + cube(13, 12, 10, GOLD),
  chain: p('M3 15h7v7H3z', '#f9e04a', '#d22', 1.500) + p('M8 8h7v7H8zM14 2h7v7h-7z', '#fff', '#333', 1.300), stampcube: cube(2, 1, 21, ['#dcdcdc', '#c2c2c2', '#8e8e8e', '#666']) + p('M1 14l12-3 3 4-2 5-12 3z', '#fbd89c', '#a87436'), link: '<g fill="none" stroke="#8f9430" stroke-width="2.200"><ellipse cx="10" cy="7" rx="4" ry="6" transform="rotate(-15 10 7)"/><ellipse cx="14" cy="16" rx="4" ry="6" transform="rotate(-15 14 16)"/></g>', linkpath: p('M3 12V4h4M7 2h16v4H7z', 'none', '#444', 1.300) + p('M1 10l2 4 2-4z', '#333') + '<g fill="none" stroke="#8f9430" stroke-width="1.700"><ellipse cx="16" cy="12" rx="3" ry="4"/><ellipse cx="18" cy="18" rx="3" ry="4"/></g>',
  sketchnew: p('M1 2l17 3v17L1 19zM4 6l5 1v5l-5-1zM11 8h4v4h-4zM4 14l4 1v3l-4-1zM11 14l4 1v4l-4-1z', '#eef0ee', '#445', 1.300) + p('M18 0l1 5 5-1-4 4 2 5-4-3-4 3 1-5-4-3h5z', '#f7ea4a', '#c9a820', .6), finish: p('M0 0h24v24H0z', '#dcdcdc', '#aaa') + p('M3 4q9-3 18 1l-3 10q-5-4-11-1z', '#f8f8f8', '#888') + p('M5 4l3 0 1 4-3 1zM12 3l3 1 0 4-3-1zM9 8h3l1 4-3 0zM16 9l3 1-1 4-3-2z', '#777', 'none') + p('M3 4l7 19', 'none', '#888', 1.500),
  prof: p('M2 2v15q5 7 9 0V9q5-8 9 0v11', 'none', '#333', 1.200) + dot(2, 14) + dot(11, 14) + dot(20, 14), line: p('M4 20L20 4', 'none', '#333', 1.200) + dot(4, 20, '#e0352b', 2.400) + dot(20, 4, '#e0352b', 2.400), arc: p('M3 4q18 0 18 17', 'none', '#333', 1.200) + dot(3, 4, '#e0352b', 2.400) + dot(21, 21, '#e0352b', 2.400) + dot(16, 9, '#e0352b', 2.400),
  circle: '<circle cx="12" cy="12" r="10" fill="none" stroke="#333" stroke-width="1.300"/>', corner: p('M2 3h8q11 1 11 11v8', 'none', '#aaa', 1.200), chamf: p('M1 3h10l11 10v9', 'none', '#aaa', 1.200), rect: p('M3 5h19v14H3z', 'none', '#333', 1.300) + dot(3, 5, '#e0352b', 2.400) + dot(22, 19, '#e0352b', 2.400),
  spline: p('M3 12L8 3l8 17 6-11', 'none', '#999', 1.200) + p('M3 12q5-5 9 0t10-3', 'none', '#444') + dot(3, 12, '#999') + dot(8, 4, '#999') + dot(16, 20, '#999') + dot(22, 10, '#999') + dot(8, 10) + dot(16, 14), cross2: p('M12 3v18M3 12h18', 'none', '#333', 1.600), offset: p('M2 21V10Q5 1 13 4q10 0 8 10-1 7-8 7zM6 17v-6q3-6 8-2 6 0 3 5-5 1-5 3z', 'none', '#aaa', 1.300),
  trim1: p('M4 3l12 19M1 16h12', 'none', '#999', 1.300) + p('M13 12l6-5 3 2-6 6z', '#ccc', '#aaa'), trim2: p('M4 3l12 19M1 16h12', 'none', '#999', 1.300) + p('M13 15l7-10 3 2-7 9z', '#ccc', '#aaa'), trim3: p('M1 12h13M14 12v11M10 8l9 9', 'none', '#999', 1.300) + '<path d="M14 2v10h9" fill="none" stroke="#bbb" stroke-dasharray="1 1"/>', qdim: p('M1 9v12M23 9v12M2 15h20M5 12l-3 3 3 3M19 12l3 3-3 3', 'none', '#aaa', 1.300) + p('M16 1l-7 9h4l-4 8 9-11h-4l5-6z', '#ddd', '#aaa'),
  perp: p('M2 16l8-8m-4 8l8-8', 'none', '#999', 1.300) + p('M17 12v9M11 21h12', 'none', '#999', 1.300), sym: p('M5 4H2v18h3M19 4h3v18h-3', 'none', '#888', 1.600) + '<path d="M12 1v22" stroke="#888" stroke-dasharray="4 2"/>' + p('M5 5h5M19 5h-5M10 2v6M14 2v6', 'none', '#888'), autoc: p('M1 8v9l6-5z', '#bbb', 'none') + p('M10 12l8-10m-3 11l8-10M17 14v8M12 22h11', 'none', '#999', 1.300),
  show: p('M2 2h10v9H2zM11 14h12v9H11z', '#fff', '#888', 1.300) + p('M2 16h6v6H2z', '#eee', '#999') + p('M13 13l7-10 3 2-7 9z', '#ccc', '#aaa'), lock3: p('M10 2q-8-2-8 5t9 4V7', 'none', '#bbb', 1.800) + p('M1 17l7-3h8v7H3z', '#ddd', '#aaa') + p('M12 12l7-10 3 2-7 10zM15 14h8v8h-8z', '#d5d5d5', '#aaa'), lock4: p('M10 2q-8-2-8 5t9 4V7', 'none', '#bbb', 1.800) + p('M1 17l8-4h14v7l-8 4H1z', '#ddd', '#aaa') + p('M14 6h5v10h-5z', '#eee', '#aaa')
};

document.querySelectorAll('[data-items]').forEach(host => {
  const html = host.dataset.items.split(' ').map(token => {
    if (token === '|') return '<span class="sep"></span>';
    if (token === 'v') return '<button type="button" class="drop" aria-label="下拉"></button>';
    if (token === 'w') return '<button type="button" class="drop low" aria-label="工具条选项"></button>';
    if (/^\.+$/.test(token)) return `<span class="gap${token.length}"></span>`;
    if (token === '»') return '<button type="button" class="more">»</button>';
    if (token === 'finish-label') return '<span class="finish-label">完成草图</span>';
    const pressed = token.endsWith('!');
    const id = token.replace('!', '');
    return `<button type="button" class="tool${pressed ? ' pressed' : ''}" aria-label="${id}"><svg viewBox="0 0 24 24">${ICONS[id]}</svg></button>`;
  });
  host.insertAdjacentHTML('beforeend', html.join(''));
});

const TABS = [
  ['', p('M-3 10h8M5 6v8l3-4z', '#222', '#222', 1.500)],
  ['active', p('M0 5h10', 'none', '#333') + cube(-5, 0, 9, GOLD) + cube(1, 13, 8, GOLD)],
  ['', p('M6 0v10L0 5z', '#1a1ab8', 'none') + p('M0 13l9 9H0z', '#c61a1a', '#811')],
  ['', p('M0 4h9', 'none', '#333') + '<circle cx="4" cy="15" r="5" fill="#fff" stroke="#8a2a70"/><circle cx="4" cy="15" r="2" fill="none" stroke="#8a2a70"/>'],
  ['', p('M-3 6l4-4h9v15l-4 5h-9z', '#3a9aef', '#1a5ab8') + p('M6 6v16M0 11h6M0 16h6', 'none', '#bfe0ff')],
  ['tall', p('M-6 0q16 2 16 18M-6 6q10 1 10 12', 'none', '#2a6ad0', 2) + dot(-1, 18, '#2a8ae8', 5)],
  ['tall', p('M-5 2h9l4 4v17H-5z', '#fff', '#456') + dot(0, 13, '#2c9a6a', 5) + dot(0, 13, '#b8d8f8', 2)],
  ['mid', '<circle cx="0" cy="12" r="9.500" fill="#d8e8fb" stroke="#556" stroke-width="1.500"/>' + p('M0 12h7', 'none', '#222', 1.300)],
  ['', p('M-3 4L8 19', 'none', '#111', 3) + dot(2, 3, '#bbb', 1)],
  ['', p('M0 7h10l-3 4H0', 'none', '#3a6ac0', 1.300) + p('M-3 4L8 21', 'none', '#111', 3)],
  ['', p('M0 3q4-4 7 0l-3 5M0 12l6-6', 'none', '#444', 1.500) + dot(2, 19, '#446', 3)],
  ['', p('M-4 3H9v17H-4z', '#fff', '#666') + p('M-3 6H7v5h-10z', '#2a8ae8', 'none') + p('M0 15V9l3 4 4-5v8z', '#e0402a', 'none')]
];
document.getElementById('tabs').innerHTML = TABS.map(([cls, art], i) => `<button type="button" class="${cls}" aria-label="资源 ${i + 1}"><svg viewBox="0 0 12 24">${art}</svg></button>`).join('');

const parts = Array(19).fill('HUODAO_A').concat(['ZHICHENGE', 'SHENGJIAN', 'SHENGJIAN', 'HENGYITON', 'QUFANKOU', 'WAIKE_ASM']);
const leaves = ['ZHICHENGE', 'QUFANKOU'];
document.getElementById('tree').innerHTML = parts.map(name => {
  const leaf = leaves.includes(name);
  return `<li>${leaf ? '<span class="leaf"></span>' : '<button type="button" class="expand" aria-label="展开"></button>'}<label><input type="checkbox" checked><svg viewBox="0 0 24 24">${leaf ? cube(3, 2, 19, GOLD) : stack(GOLD)}</svg>${name}</label></li>`;
}).join('');
```
